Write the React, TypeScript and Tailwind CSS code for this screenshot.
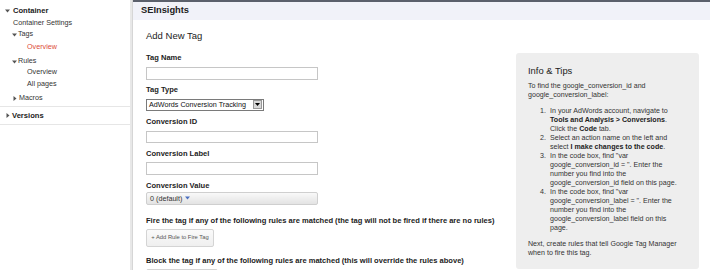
import React from "react";

const Down = ({ c = "#555" }: { c?: string }) => (
  <svg width="5" height="4" viewBox="0 0 5 4" className="shrink-0">
    <path d="M0 0.5 L5 0.5 L2.5 3.5 Z" fill={c} />
  </svg>
);
const Right = ({ c = "#555" }: { c?: string }) => (
  <svg width="4" height="5" viewBox="0 0 4 5" className="shrink-0">
    <path d="M0.5 0 L3.5 2.5 L0.5 5 Z" fill={c} />
  </svg>
);

function Sidebar() {
  return (
    <div className="w-[130px] shrink-0 flex flex-col text-[7.2px] text-[#333]">
      <div className="mt-[5px] h-[11px] flex items-center pl-[5px] gap-[3px]">
        <Down />
        <span className="font-bold text-[7.6px] text-[#222]">Container</span>
      </div>
      <div className="mt-[2px] h-[11px] flex items-center pl-[13px]">Container Settings</div>
      <div className="h-[11px] flex items-center pl-[12px] gap-[1px]">
        <Down />
        <span>Tags</span>
      </div>
      <div className="mt-[1.5px] h-[11px] flex items-center pl-[27px] text-[#dd4b39]">Overview</div>
      <div className="mt-[3.5px] h-[11px] flex items-center pl-[12px] gap-[1px]">
        <Down />
        <span>Rules</span>
      </div>
      <div className="h-[11px] flex items-center pl-[27px]">Overview</div>
      <div className="mt-[0.5px] h-[11px] flex items-center pl-[27px]">All pages</div>
      <div className="mt-[3.5px] h-[11px] flex items-center pl-[13px] gap-[2px]">
        <Right />
        <span>Macros</span>
      </div>
      <div className="mt-[2px] h-px bg-[#e6e6e6]" />
      <div className="mt-[3px] h-[11px] flex items-center pl-[6px] gap-[2px]">
        <Right />
        <span className="font-bold text-[7.6px] text-[#222]">Versions</span>
      </div>
      <div className="mt-[3px] h-px bg-[#e6e6e6]" />
    </div>
  );
}

const Label = ({ children, mt }: { children: React.ReactNode; mt: string }) => (
  <div className={`${mt} h-[9px] leading-[9px] text-[7.55px] font-bold text-[#222] whitespace-nowrap`}>{children}</div>
);

const Input = ({ mt }: { mt: string }) => (
  <div className={`${mt} w-[172px] h-[12.5px] border border-[#c6c6c6] bg-white`} />
);

function Form() {
  return (
    <div className="flex-1 flex flex-col pl-[13px]">
      <div className="mt-[10.5px] h-[12px] leading-[12px] text-[9.5px] text-[#222]">Add New Tag</div>
      <Label mt="mt-[11px]">Tag Name</Label>
      <Input mt="mt-[5px]" />
      <Label mt="mt-[5.5px]">Tag Type</Label>
      <div className="mt-[4.5px] w-[118px] h-[12px] border border-[#7a7a7a] bg-white flex items-center justify-between pl-[2px] pr-[1px]">
        <span className="text-[7.2px] text-[#111] leading-none">AdWords Conversion Tracking</span>
        <div className="w-[9px] h-[9px] bg-[#d8d8d8] border border-[#999] flex items-center justify-center">
          <svg width="5" height="3" viewBox="0 0 5 3">
            <path d="M0 0 L5 0 L2.5 3 Z" fill="#000" />
          </svg>
        </div>
      </div>
      <Label mt="mt-[6px]">Conversion ID</Label>
      <Input mt="mt-[5px]" />
      <Label mt="mt-[5.5px]">Conversion Label</Label>
      <Input mt="mt-[4.5px]" />
      <Label mt="mt-[6.5px]">Conversion Value</Label>
      <div className="mt-[1.5px] w-[172px] h-[13.5px] rounded-[2px] border border-[#cfcfcf] bg-gradient-to-b from-[#f9f9f9] to-[#e3e3e3] flex items-center pl-[3px] gap-[3px]">
        <span className="text-[7.2px] text-[#333] leading-none">0 (default)</span>
        <Down c="#4b6fbf" />
      </div>
      <Label mt="mt-[10.5px]">
        Fire the tag if any of the following rules are matched (the tag will not be fired if there are no rules)
      </Label>
      <div className="mt-[4px] w-[68px] h-[18px] rounded-[2px] border border-[#d4d4d4] bg-gradient-to-b from-[#fafafa] to-[#efefef] flex items-center justify-center">
        <span className="text-[5.8px] text-[#555] leading-none whitespace-nowrap">+ Add Rule to Fire Tag</span>
      </div>
      <Label mt="mt-[9.5px]">
        Block the tag if any of the following rules are matched (this will override the rules above)
      </Label>
      <div className="mt-[4px] w-[72px] h-[18px] rounded-[2px] border border-[#d4d4d4] bg-gradient-to-b from-[#fafafa] to-[#efefef]" />
    </div>
  );
}

function Info() {
  const li = "flex";
  return (
    <div className="mt-[33px] mr-[11px] w-[183px] h-[216px] shrink-0 rounded-[3px] bg-[#eeeeee] pl-[12px] pt-[12px] text-[7.1px] leading-[9px] text-[#333]">
      <div className="h-[12px] leading-[12px] text-[9.4px] text-[#222]">Info &amp; Tips</div>
      <div className="mt-[5px] whitespace-nowrap">
        To find the google_conversion_id and
        <br />
        google_conversion_label:
      </div>
      <div className="mt-[7.5px] ml-[11px] flex flex-col whitespace-nowrap">
        <div className={li}>
          <span className="w-[11px] pl-[1px]">1.</span>
          <span>
            In your AdWords account, navigate to
            <br />
            <b className="text-[#222]">Tools and Analysis &gt; Conversions</b>.
            <br />
            Click the <b className="text-[#222]">Code</b> tab.
          </span>
        </div>
        <div className={li}>
          <span className="w-[11px] pl-[1px]">2.</span>
          <span>
            Select an action name on the left and
            <br />
            select <b className="text-[#222]">I make changes to the code</b>.
          </span>
        </div>
        <div className={li}>
          <span className="w-[11px] pl-[1px]">3.</span>
          <span>
            In the code box, find "var
            <br />
            google_conversion_id = ". Enter the
            <br />
            number you find into the
            <br />
            google_conversion_id field on this page.
          </span>
        </div>
        <div className={li}>
          <span className="w-[11px] pl-[1px]">4.</span>
          <span>
            In the code box, find "var
            <br />
            google_conversion_label = ". Enter the
            <br />
            number you find into the
            <br />
            google_conversion_label field on this
            <br />
            page.
          </span>
        </div>
      </div>
      <div className="mt-[7px] whitespace-nowrap">
        Next, create rules that tell Google Tag Manager
        <br />
        when to fire this tag.
      </div>
    </div>
  );
}

export default function App() {
  return (
    <div className="w-[710px] h-[270px] overflow-hidden flex bg-white font-['Liberation_Sans',Arial,sans-serif]">
      <Sidebar />
      <div className="w-[3px] shrink-0 bg-[#e8e8e8] border-r border-[#d6d6d6]" />
      <div className="flex-1 flex flex-col border-t-2 border-[#5b606c]">
        <div className="h-[17.5px] shrink-0 bg-[#f1f2f9] flex items-center pl-[8px]">
          <span className="text-[9.3px] font-bold text-[#222]">SEInsights</span>
        </div>
        <div className="flex flex-1">
          <Form />
          <Info />
        </div>
      </div>
    </div>
  );
}
